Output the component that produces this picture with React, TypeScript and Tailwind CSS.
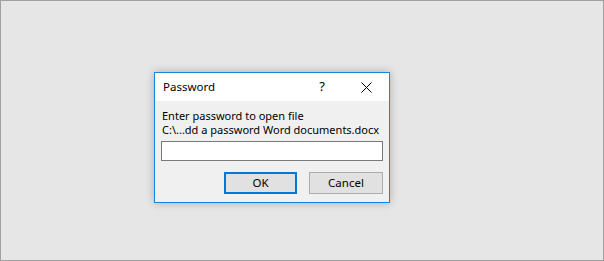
export default function App() {
  return (
    <main
      className="flex h-[261px] w-[604px] border border-[#a0a0a0] bg-[#e6e6e6] pl-[153px] pt-[71px]"
      style={{ fontFamily: '"Noto Sans", "Segoe UI", sans-serif' }}
    >
      <div className="flex h-[131px] w-[236px] flex-col border border-[#1883d7] bg-[#f0f0f0] shadow-[0_0_8px_rgba(0,0,0,0.25)]">
        {/* Title bar */}
        <div className="flex h-[28px] shrink-0 items-center bg-white pl-[8px] text-[11.5px] text-black">
          <span className="flex-1">Password</span>
          <span className="w-[12px] text-center text-[13px]">?</span>
          <svg className="ml-[33px] mr-[17px]" width="11" height="11" viewBox="0 0 11 11">
            <path d="M0.5 0.5 L10.5 10.5 M10.5 0.5 L0.5 10.5" stroke="#000" strokeWidth="1" />
          </svg>
        </div>

        {/* Body */}
        <div className="flex flex-1 flex-col px-[6px] pt-[8px] text-[11px] leading-[14px] text-black">
          <p className="whitespace-nowrap pl-[1px]">Enter password to open file</p>
          <p className="whitespace-nowrap pl-[1px]">C:\...dd a password Word documents.docx</p>
          <input
            type="password"
            className="mt-[4px] h-[20px] w-[222px] shrink-0 border border-[#7a7a7a] bg-white outline-none"
          />
          <div className="mt-[11px] flex gap-[12px] pl-[63px]">
            <button className="h-[22px] w-[73px] border-2 border-[#0078d7] bg-[#e1e1e1] text-[11.5px]">
              OK
            </button>
            <button className="h-[22px] w-[74px] border border-[#adadad] bg-[#e1e1e1] text-[11.5px]">
              Cancel
            </button>
          </div>
        </div>
      </div>
    </main>
  );
}
